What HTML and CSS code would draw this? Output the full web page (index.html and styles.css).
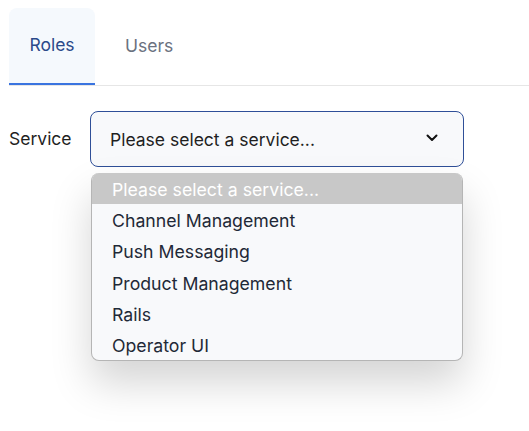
FILE: index.html
```html
<!DOCTYPE html>
<html>
<head>
<meta charset="utf-8">
<link rel="stylesheet" href="styles.css">
</head>
<body>
<div class="page">
  <div class="tabs">
    <div class="tab active">Roles</div>
    <div class="tab">Users</div>
  </div>
  <div class="field">
    <span class="label">Service</span>
    <div class="select-wrap">
      <div class="select">
        <span>Please select a service...</span>
        <svg class="chev" width="12" height="8" viewBox="0 0 12 8"><path d="M1.5 1.5 L6 6 L10.5 1.5" fill="none" stroke="#111" stroke-width="2" stroke-linecap="round" stroke-linejoin="round"/></svg>
      </div>
      <div class="popup">
        <div class="opt selected">Please select a service...</div>
        <div class="opt">Channel Management</div>
        <div class="opt">Push Messaging</div>
        <div class="opt">Product Management</div>
        <div class="opt">Rails</div>
        <div class="opt">Operator UI</div>
      </div>
    </div>
  </div>
</div>
</body>
</html>
```
FILE: styles.css
```css
html, body {
  margin: 0;
  padding: 0;
  background: #fff;
}
body {
  font-family: Inter, "Noto Sans", sans-serif;
  font-size: 17.5px;
  color: #1a1a1a;
  min-height: 431px;
}
.page {
  padding: 8px 0 0 9px;
}
.tabs {
  display: flex;
  gap: 10px;
  border-bottom: 1px solid #e6e6e6;
  height: 77px;
}
.tab {
  box-sizing: border-box;
  height: 77px;
  padding: 0 20px 3px;
  display: flex;
  align-items: center;
  color: #6b7280;
}
.tab.active {
  width: 86px;
  justify-content: center;
  background: #f5f9fd;
  border-radius: 8px 8px 0 0;
  color: #2b4a8a;
  border-bottom: 2px solid #3a74e0;
}
.field {
  display: flex;
  align-items: flex-start;
  margin-top: 25px;
}
.label {
  width: 81px;
  line-height: 56px;
  color: #1f1f1f;
}
.select-wrap {
  display: flex;
  flex-direction: column;
  gap: 6px;
}
.select {
  box-sizing: border-box;
  width: 374px;
  height: 56px;
  border: 1px solid #2f4f98;
  border-radius: 8px;
  background: #f8f9fb;
  display: flex;
  align-items: center;
  justify-content: space-between;
  padding: 0 25px 0 19px;
  color: #1f1f1f;
}
.chev {
  display: block;
  margin-top: -2px;
}
.popup {
  margin-left: 1px;
  width: 372px;
  box-sizing: border-box;
  background: #f8f9fb;
  border: 1px solid #b5b5b5;
  border-top: none;
  border-radius: 8px;
  overflow: hidden;
  font-size: 17.7px;
  box-shadow: 0 22px 40px rgba(0,0,0,0.17);
}
.opt {
  box-sizing: border-box;
  height: 31.2px;
  padding: 2px 0 0 20px;
  line-height: 29.2px;
  color: #1f2937;
  white-space: nowrap;
}
.opt.selected {
  background: #c8c8c8;
  color: #fff;
}
```
